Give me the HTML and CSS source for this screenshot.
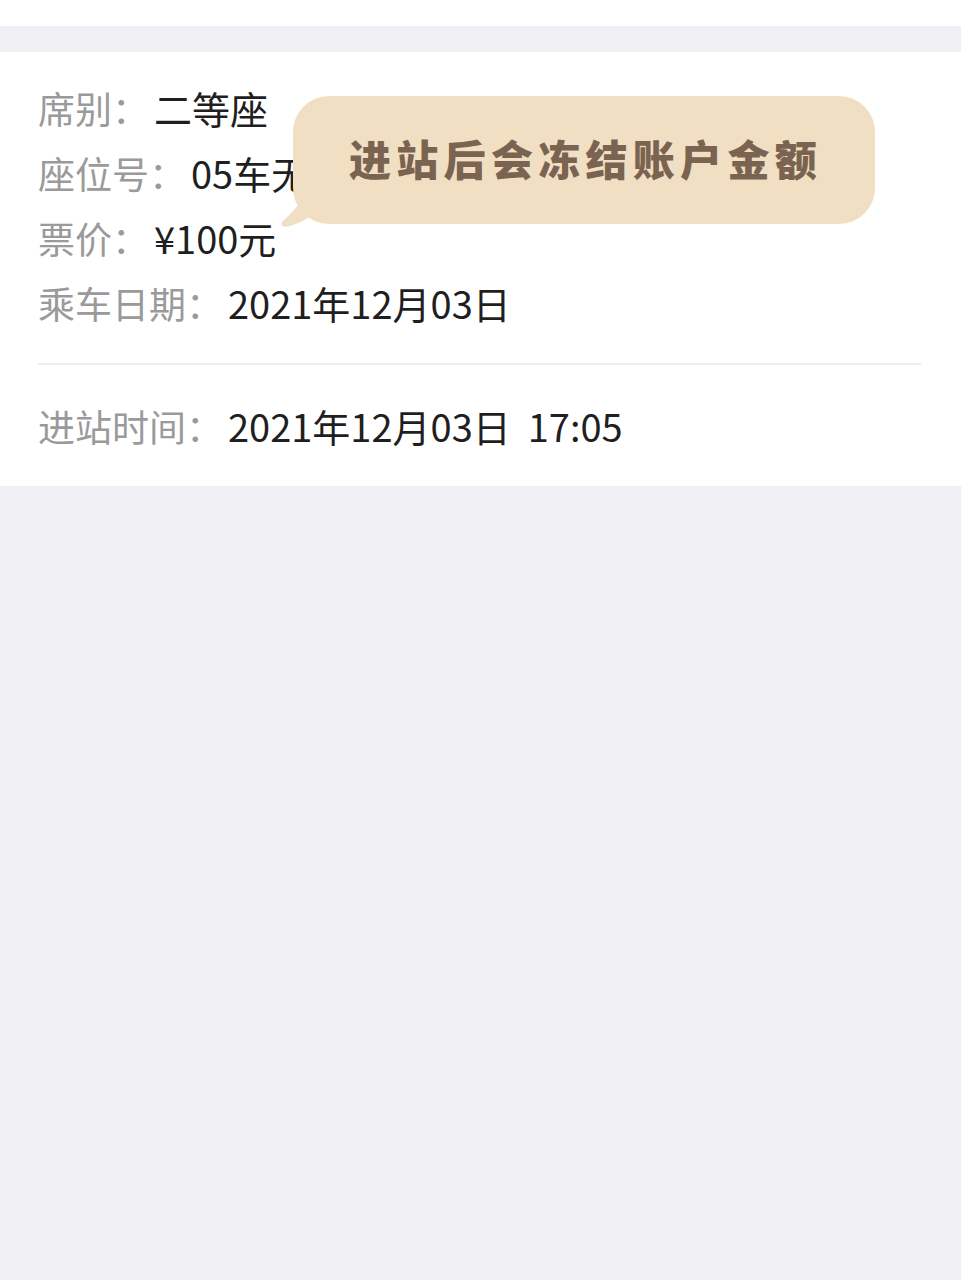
FILE: index.html
```html
<!DOCTYPE html>
<html lang="zh-CN">
<head>
<meta charset="utf-8">
<link rel="stylesheet" href="styles.css">
</head>
<body>
<div class="top"></div>
<div class="band"></div>
<section class="card">
  <div class="rows">
    <div class="row"><span class="label">席别：</span><span class="value">二等座</span></div>
    <div class="row"><span class="label">座位号：</span><span class="value">05车无座</span></div>
    <div class="row"><span class="label">票价：</span><span class="value">¥100元</span></div>
    <div class="row"><span class="label">乘车日期：</span><span class="value">2021年12月03日</span></div>
  </div>
  <div class="divider"></div>
  <div class="rows last">
    <div class="row"><span class="label">进站时间：</span><span class="value">2021年12月03日&nbsp; 17:05</span></div>
  </div>
  <div class="bubble">
    <span class="bubble-text">进站后会冻结账户金额</span>
    <svg class="tail" width="44" height="44" viewBox="0 0 44 44"><path d="M26 0 L44 0 L44 16 C36 24 26 32 10 37 C4 39 0 37 2 33 C12 24 22 14 26 0 Z" fill="#f0dfc2"/></svg>
  </div>
</section>
</body>
</html>
```
FILE: styles.css
```css
html, body {
  margin: 0;
  padding: 0;
}
body {
  background: #efeff4;
  font-family: "Noto Sans CJK SC", "Noto Sans", sans-serif;
  width: 961px;
  min-height: 1280px;
}
.top {
  height: 26px;
  background: #ffffff;
}
.band {
  height: 26px;
  background: #efeff4;
}
.card {
  position: relative;
  background: #ffffff;
  padding: 23px 38px 28px 38px;
}
.row {
  display: flex;
  align-items: center;
  height: 65px;
  font-size: 37px;
  white-space: nowrap;
}
.label {
  color: #9a9a9a;
  margin-right: 5px;
}
.value {
  color: #1f1f1f;
  font-size: 38px;
}
.divider {
  height: 2px;
  background: #eeeeee;
  margin: 28px 2px 28px 0;
}
.bubble {
  position: absolute;
  left: 293px;
  top: 44px;
  width: 582px;
  height: 128px;
  box-sizing: border-box;
  background: #f0dfc2;
  border-radius: 36px;
  display: flex;
  align-items: center;
  padding-left: 56px;
  padding-bottom: 5px;
}
.bubble-text {
  color: #7a6350;
  font-size: 42px;
  font-weight: 900;
  letter-spacing: 5.3px;
  white-space: nowrap;
}
.tail {
  position: absolute;
  left: -13px;
  bottom: -9px;
}
```
